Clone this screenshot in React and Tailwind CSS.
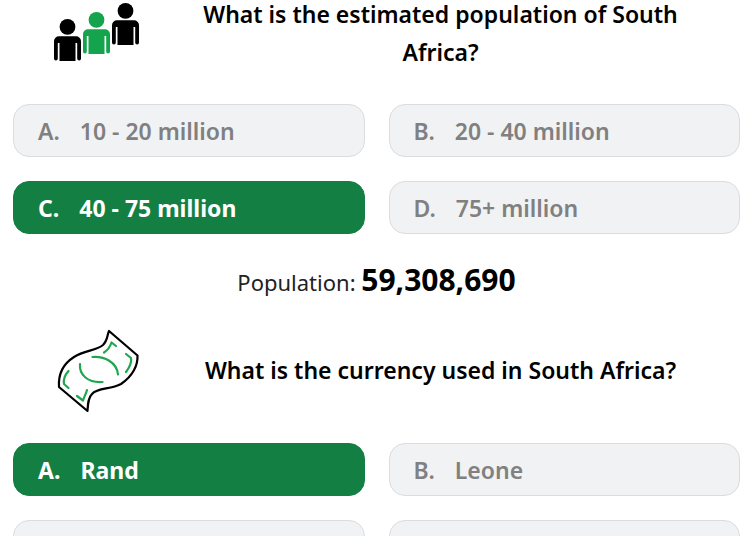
import { useState } from "react";

const QUESTIONS = [
  {
    id: "population",
    icon: PeopleIcon,
    text: "What is the estimated population of South Africa?",
    options: ["10 - 20 million", "20 - 40 million", "40 - 75 million", "75+ million"],
    answer: 2,
    fact: { label: "Population:", value: "59,308,690" },
  },
  {
    id: "currency",
    icon: BanknoteIcon,
    text: "What is the currency used in South Africa?",
    options: ["Rand", "Leone", "Dalasi", "Kwacha"],
    answer: 0,
  },
];

const LETTERS = ["A", "B", "C", "D"];

function Person({ x, y, color }) {
  return (
    <g transform={`translate(${x} ${y})`} fill={color}>
      <circle cx="13.5" cy="7.9" r="7.9" />
      <path d="M5 17.3h17a5 5 0 0 1 5 5V39.5a1.9 1.9 0 0 1-3.8 0V24h-1.7V42H5.5V24H3.8V39.5a1.9 1.9 0 0 1-3.8 0V22.3a5 5 0 0 1 5-5Z" />
    </g>
  );
}

function PeopleIcon() {
  return (
    <svg viewBox="0 0 86 60" className="w-[86px] h-[60px]" aria-hidden="true">
      <Person x={0} y={16} color="#000" />
      <Person x={29} y={9} color="#14a44d" />
      <Person x={58} y={0} color="#000" />
    </svg>
  );
}

function BanknoteIcon() {
  return (
    <svg
      viewBox="0 3 86 80"
      className="w-[86px] h-[80px] overflow-visible"
      fill="none"
      strokeLinecap="round"
      strokeLinejoin="round"
      aria-hidden="true"
    >
      <path
        stroke="#000"
        strokeWidth="2.2"
        d="M55 4L83.5 28.5C84 38 79 49 67 57C56 63 44 60 38 67C34 71 34 77 33.5 84L5 60C4 46 9 37 20 30C31 23 42 24 49 18C54 13 53 8 55 4Z"
      />
      <g stroke="#1fa650" strokeWidth="2.2">
        <path d="M38.5 30C50 29 63 35 64 47.5" />
        <path d="M26 37C25 48 34 56 48.5 55" />
        <path d="M50 25.5C54 23 56 20 57.5 15.5L62 19" />
        <path d="M72 27L77 31C78 36 75 41 72 45" />
        <path d="M14.5 44C11 48 9 52 10 57L14.5 61" />
        <path d="M23 69L29 73.5C30 70 32 67 33 63" />
      </g>
    </svg>
  );
}

function Option({ letter, label, selected, onSelect }) {
  return (
    <button
      type="button"
      aria-pressed={selected}
      onClick={onSelect}
      className={`flex items-center gap-5 rounded-2xl border px-6 pt-[10px] pb-2 text-left text-[23px] leading-[33px] ${
        selected
          ? "border-[#137f43] bg-[#137f43] font-bold text-white"
          : "border-[#dadce0] bg-[#f1f2f4] font-semibold text-[#808080]"
      }`}
    >
      <span>{letter}.</span>
      <span>{label}</span>
    </button>
  );
}

function Question({ question }) {
  const [picked, setPicked] = useState(question.answer);
  const Icon = question.icon;

  return (
    <section>
      <div className="flex items-center">
        <div className="flex w-[168px] shrink-0 justify-center">
          <Icon />
        </div>
        <h2 className="flex-1 pr-14 pl-4 text-center text-[23px] leading-[38px] font-semibold text-black">
          {question.text}
        </h2>
      </div>

      <div className="mt-[33px] grid grid-cols-2 gap-6">
        {question.options.map((label, i) => (
          <Option
            key={label}
            letter={LETTERS[i]}
            label={label}
            selected={picked === i}
            onSelect={() => setPicked(i)}
          />
        ))}
      </div>

      {question.fact && (
        <p className="mt-7 text-center text-[22px] leading-9 text-[#222]">
          {question.fact.label}{" "}
          <strong className="text-[30px] font-bold text-black">{question.fact.value}</strong>
        </p>
      )}
    </section>
  );
}

export default function App() {
  return (
    <main className="h-screen overflow-hidden bg-white font-['Noto_Sans','Open_Sans',sans-serif]">
      <div className="-mt-[5px] flex flex-col gap-[30px] pr-[10px] pl-[13px]">
        {QUESTIONS.map((question) => (
          <Question key={question.id} question={question} />
        ))}
      </div>
    </main>
  );
}
